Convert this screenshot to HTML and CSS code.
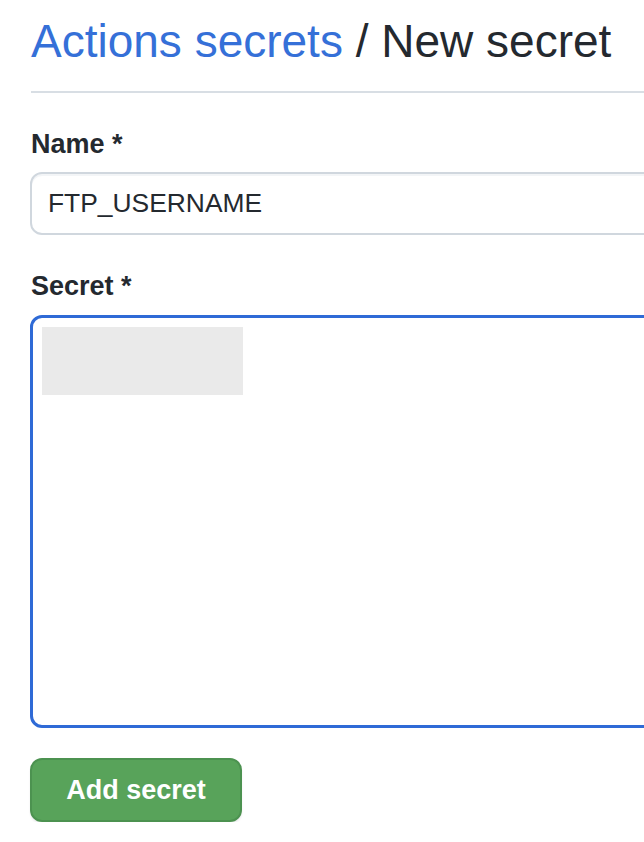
FILE: index.html
```html
<!DOCTYPE html>
<html lang="en">
<head>
<meta charset="utf-8">
<title>Actions secrets / New secret</title>
<link rel="stylesheet" href="styles.css">
</head>
<body>
<main class="page">
  <h2 class="title"><a class="crumb" href="#">Actions secrets</a> / New secret</h2>
  <form class="form">
    <div class="field">
      <label class="label" for="name">Name *</label>
      <input class="input" id="name" type="text" value="FTP_USERNAME">
    </div>
    <div class="field">
      <label class="label" for="secret">Secret *</label>
      <div class="textarea" id="secret"><div class="redacted"></div></div>
    </div>
    <button class="btn" type="button">Add secret</button>
  </form>
</main>
</body>
</html>
```
FILE: styles.css
```css
html, body {
  margin: 0;
  padding: 0;
  background: #ffffff;
  overflow: hidden;
}
body {
  font-family: "Liberation Sans", Arial, sans-serif;
  color: #24292f;
}
.page {
  padding: 13px 0 0 31px;
  width: 760px;
}
.title {
  margin: 0;
  font-size: 46px;
  font-weight: 400;
  line-height: 57px;
  padding-bottom: 21px;
  border-bottom: 2px solid #d8dee4;
  white-space: nowrap;
}
.crumb {
  color: #3570d8;
  text-decoration: none;
}
.form {
  display: flex;
  flex-direction: column;
  padding-top: 31px;
}
.field {
  display: flex;
  flex-direction: column;
  gap: 8px;
  margin-bottom: 31px;
}
.field + .btn {
  margin-top: -1px;
}
.label {
  font-size: 27px;
  font-weight: 700;
  line-height: 40px;
}
.input {
  margin-left: -1px;
  height: 63px;
  box-sizing: border-box;
  border: 2px solid #d0d7de;
  border-radius: 12px;
  padding: 0 16px;
  font-family: "Liberation Sans", Arial, sans-serif;
  font-size: 26.4px;
  color: #24292f;
  background: #ffffff;
  box-shadow: inset 0 2px 0 rgba(208, 215, 222, 0.25);
  outline: none;
}
.textarea {
  margin-left: -1px;
  margin-top: 1px;
  height: 413px;
  box-sizing: border-box;
  border: 3.5px solid #2f6ad6;
  border-radius: 12px;
  padding: 8.5px 8.5px;
}
.redacted {
  width: 201px;
  height: 68px;
  background: #eaeaea;
}
.btn {
  align-self: flex-start;
  margin-left: -1px;
  width: 212px;
  height: 64px;
  box-sizing: border-box;
  background: #58a35a;
  border: 2px solid #4c9250;
  border-radius: 12px;
  color: #ffffff;
  font-family: "Liberation Sans", Arial, sans-serif;
  font-size: 27px;
  font-weight: 700;
  box-shadow: 0 2px 2px rgba(27, 31, 36, 0.08);
  padding: 0;
}
```
